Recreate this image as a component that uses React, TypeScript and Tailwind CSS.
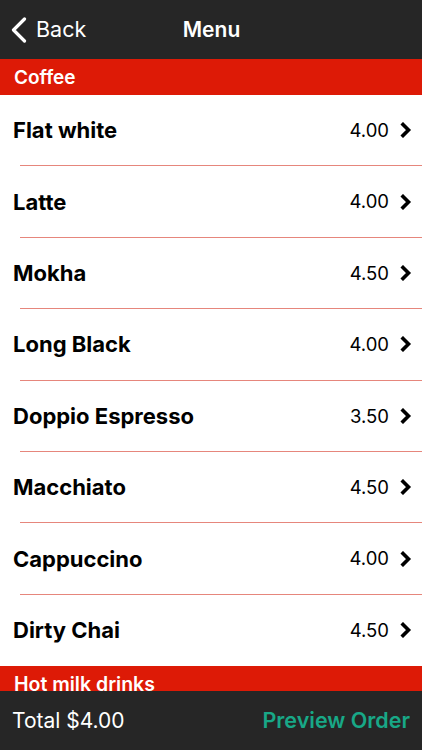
import React from "react";

const items = [
  ["Flat white", "4.00"],
  ["Latte", "4.00"],
  ["Mokha", "4.50"],
  ["Long Black", "4.00"],
  ["Doppio Espresso", "3.50"],
  ["Macchiato", "4.50"],
  ["Cappuccino", "4.00"],
  ["Dirty Chai", "4.50"],
];

const font = { fontFamily: "Inter, 'Liberation Sans', sans-serif" };

function Chevron() {
  return (
    <svg width="12" height="16" viewBox="0 0 12 16" className="block">
      <path d="M3 2.5 L8.5 8 L3 13.5" fill="none" stroke="#000" strokeWidth="3.6" strokeLinecap="square" strokeLinejoin="miter" />
    </svg>
  );
}

export default function App() {
  return (
    <div className="w-[422px] h-[750px] overflow-hidden bg-white flex flex-col" style={font}>
      <div className="h-[59px] bg-[#262626] flex items-center relative shrink-0">
        <div className="flex items-center pl-[11px] gap-[9px] text-white">
          <svg width="16" height="26" viewBox="0 0 16 26">
            <path d="M13.5 2 L2.5 13 L13.5 24" fill="none" stroke="#fff" strokeWidth="3.2" strokeLinecap="round" strokeLinejoin="round" />
          </svg>
          <span className="text-[21.5px] leading-none">Back</span>
        </div>
        <div className="absolute left-0 right-0 top-0 bottom-0 flex items-center justify-center pointer-events-none">
          <span className="text-white text-[21px] font-semibold leading-none ml-[1px]">Menu</span>
        </div>
      </div>
      <div className="h-[36px] bg-[#dd1a06] flex items-center px-[14px] shrink-0">
        <span className="text-white text-[19px] font-semibold leading-none">Coffee</span>
      </div>
      <div className="flex flex-col shrink-0">
        {items.map(([name, price], i) => (
          <div key={name} className="flex flex-col">
            <div className="h-[70.4px] flex items-center pl-[13px] pr-[10px]">
              <span className="flex-1 text-[22px] font-bold text-black leading-none">{name}</span>
              <span className="text-[18.5px] text-black leading-none mr-[11px]">{price}</span>
              <Chevron />
            </div>
            {i < items.length - 1 && <div className="h-px ml-[20px] bg-[#e6867c]" />}
          </div>
        ))}
      </div>
      <div className="h-[25px] bg-[#dd1a06] flex items-end px-[14px] overflow-hidden shrink-0 mt-[1px]">
        <span className="text-white text-[19.5px] font-semibold leading-none translate-y-[3px] whitespace-nowrap">Hot milk drinks</span>
      </div>
      <div className="flex-1 bg-[#262626] flex items-center justify-between pl-[12px] pr-[12px]">
        <span className="text-white text-[21px] leading-none">Total $4.00</span>
        <span className="text-[#18a887] text-[21.5px] font-semibold leading-none">Preview Order</span>
      </div>
    </div>
  );
}
